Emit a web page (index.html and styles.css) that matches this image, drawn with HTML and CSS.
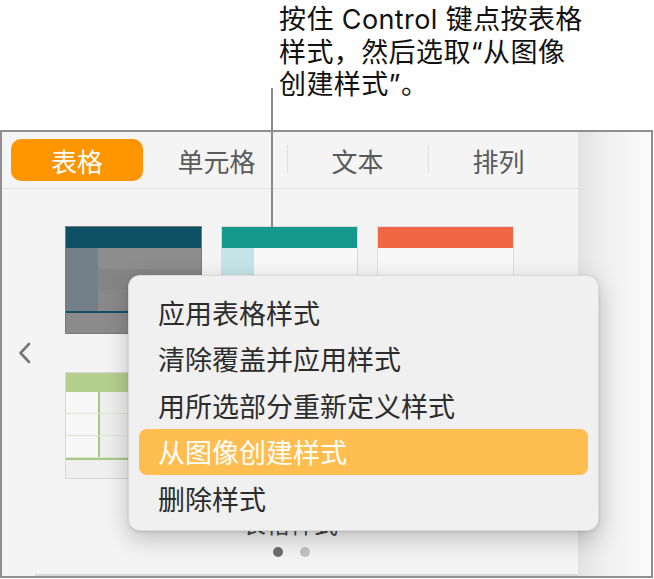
FILE: index.html
```html
<!DOCTYPE html>
<html lang="zh-CN">
<head>
<meta charset="utf-8">
<title>表格样式</title>
<link rel="stylesheet" href="styles.css">
</head>
<body>
<div class="page">
  <div class="callout">
    <p class="callout-text">按住 Control 键点按表格<br>样式，然后选取“从图像<br>创建样式”。</p>
  </div>
  <div class="leader"></div>
  <div class="window">
    <div class="panel">
      <div class="tabs">
        <div class="tab"><span class="pill">表格</span></div>
        <div class="tab">单元格</div>
        <div class="tab sep">文本</div>
        <div class="tab sep">排列</div>
      </div>
      <div class="content">
        <div class="carousel">
          <div class="nav">
            <svg class="chev" width="16" height="24" viewBox="0 0 16 24"><polyline points="12,3 3.5,12 12,21" fill="none" stroke="#777" stroke-width="2.6" stroke-linecap="round" stroke-linejoin="round"/></svg>
          </div>
          <div class="grid">
            <div class="thumb dark">
              <div class="th-head"></div>
              <div class="th-row r1"><div class="c1"></div><div class="c2"></div></div>
              <div class="th-row r2"><div class="c1"></div><div class="c2"></div></div>
              <div class="th-row r3"><div class="c1"></div><div class="c2"></div></div>
              <div class="th-rule"></div>
              <div class="th-foot"></div>
            </div>
            <div class="thumb teal">
              <div class="th-head"></div>
              <div class="th-row"><div class="c1"></div><div class="c2"></div></div>
              <div class="th-row"><div class="c1"></div><div class="c2"></div></div>
              <div class="th-row"><div class="c1"></div><div class="c2"></div></div>
              <div class="th-rule"></div>
              <div class="th-foot"></div>
            </div>
            <div class="thumb coral">
              <div class="th-head"></div>
              <div class="th-row"><div class="c1"></div><div class="c2"></div></div>
              <div class="th-row"><div class="c1"></div><div class="c2"></div></div>
              <div class="th-row"><div class="c1"></div><div class="c2"></div></div>
              <div class="th-rule"></div>
              <div class="th-foot"></div>
            </div>
            <div class="thumb green">
              <div class="th-head"></div>
              <div class="th-row"><div class="c1"></div><div class="c2"></div></div>
              <div class="th-row"><div class="c1"></div><div class="c2"></div></div>
              <div class="th-row"><div class="c1"></div><div class="c2"></div></div>
              <div class="th-rule"></div>
              <div class="th-foot"></div>
            </div>
            <div class="thumb plain">
              <div class="th-head"></div>
              <div class="th-row"><div class="c1"></div><div class="c2"></div></div>
              <div class="th-row"><div class="c1"></div><div class="c2"></div></div>
              <div class="th-row"><div class="c1"></div><div class="c2"></div></div>
              <div class="th-rule"></div>
              <div class="th-foot"></div>
            </div>
            <div class="thumb plain">
              <div class="th-head"></div>
              <div class="th-row"><div class="c1"></div><div class="c2"></div></div>
              <div class="th-row"><div class="c1"></div><div class="c2"></div></div>
              <div class="th-row"><div class="c1"></div><div class="c2"></div></div>
              <div class="th-rule"></div>
              <div class="th-foot"></div>
            </div>
          </div>
        </div>
        <div class="label">表格样式</div>
        <div class="dots"><span class="dot on"></span><span class="dot"></span></div>
        <div class="scrollline"></div>
      </div>
    </div>
    <div class="side"></div>
    <div class="menu">
      <div class="item">应用表格样式</div>
      <div class="item">清除覆盖并应用样式</div>
      <div class="item">用所选部分重新定义样式</div>
      <div class="item selected">从图像创建样式</div>
      <div class="item">删除样式</div>
    </div>
  </div>
</div>
</body>
</html>
```

FILE: styles.css
```css
* { box-sizing: border-box; }
html, body { margin: 0; padding: 0; background: #ffffff; }
body {
  font-family: Inter, "Noto Sans CJK SC", sans-serif;
  width: 654px;
  height: 579px;
  overflow: hidden;
}
.page { position: relative; width: 654px; height: 579px; }

.callout { height: 130px; }
.callout-text {
  margin: 0;
  padding: 4px 0 0 279px;
  font-size: 27px;
  line-height: 32.5px;
  color: #111;
  letter-spacing: 0.4px;
}
.leader {
  position: absolute;
  left: 271px;
  top: 88px;
  width: 2px;
  height: 139px;
  background: #8a8a8a;
  z-index: 3;
}

.window {
  position: relative;
  width: 653px;
  height: 448px;
  border: 2px solid #8f8f8f;
  display: flex;
}
.panel {
  width: 576px;
  background: #f4f4f4;
  display: flex;
  flex-direction: column;
}
.tabs {
  height: 57px;
  border-bottom: 1px solid #e2e2e2;
  display: flex;
  align-items: center;
  padding-left: 3px;
}
.tab {
  width: 141px;
  height: 42px;
  display: flex;
  align-items: center;
  justify-content: center;
  font-size: 26px;
  color: #5a5a5a;
  font-family: "Noto Sans CJK SC", sans-serif;
  position: relative;
}
.tab.sep::before {
  content: "";
  position: absolute;
  left: 0;
  top: 6px;
  width: 1px;
  height: 28px;
  background: #e0e0e0;
}
.pill {
  display: flex;
  align-items: center;
  justify-content: center;
  width: 132px;
  height: 42px;
  margin-left: 3px;
  border-radius: 10px;
  background: #ff9500;
  color: #fff;
}

.content {
  flex: 1;
  display: flex;
  flex-direction: column;
  padding-top: 37px;
}
.carousel { display: flex; align-items: center; }
.nav { width: 63px; padding-left: 15px; display: flex; align-items: center; }
.chev { display: block; }
.grid {
  display: grid;
  grid-template-columns: repeat(3, 137px);
  grid-template-rows: 108px 107px;
  column-gap: 19px;
  row-gap: 38px;
}
.thumb {
  border: 1px solid #d8d8d8;
  display: flex;
  flex-direction: column;
  overflow: hidden;
  background: #f7f7f7;
}
.th-head { height: 21px; flex: none; }
.th-row { height: 21px; display: flex; flex: none; }
.th-row .c1 { width: 32px; }
.th-row .c2 { flex: 1; }
.th-rule { height: 2px; flex: none; }
.th-foot { flex: 1; }

.dark { border-color: #7a7a7a; background: #8b8b8b; }
.dark .th-head { background: #0e5165; }
.dark .c1 { background: #73808a; }
.dark .r1 .c2 { background: #8d8d8d; }
.dark .r2 .c2 { background: #858585; }
.dark .r3 .c2 { background: #898989; }
.dark .th-rule { background: #174f63; }
.dark .th-foot { background: #8b8b8b; }

.teal { border-color: #dadada; }
.teal .th-head { background: #16998c; }
.teal .c1 { background: #c4e4e8; }
.teal .c2 { background: #f7f7f7; }
.teal .th-rule { background: #e0e0e0; }
.teal .th-foot { background: #f3f3f3; }

.coral { border-color: #dedede; }
.coral .th-head { background: #f06843; }
.coral .c1, .coral .c2 { background: #f7f7f7; }
.coral .th-rule { background: #e4e4e4; }
.coral .th-foot { background: #f3f3f3; }

.green { border-color: #d6d6d6; }
.green .th-head { height: 19px; background: #b5cf8e; }
.green .th-row { height: 22px; border-bottom: 1px solid #dfe6d6; }
.green .c1 { background: #f7f7f7; }
.green .c2 { background: #eeeeee; border-left: 2px solid #a9c884; }
.green .th-rule { background: #a9c884; }
.green .th-foot { background: #efefef; }

.plain .th-head { background: #cfcfcf; }

.label {
  margin-top: 29px;
  height: 30px;
  line-height: 30px;
  text-align: center;
  font-size: 24px;
  color: #444;
  font-family: "Noto Sans CJK SC", sans-serif;
}
.dots {
  margin-top: 9px;
  display: flex;
  justify-content: center;
  gap: 17px;
  padding-left: 2px;
}
.dot { width: 10px; height: 10px; border-radius: 50%; background: #c4c4c4; }
.dot.on { background: #6e6e6e; }
.scrollline {
  margin-top: auto;
  margin-left: 33px;
  height: 2px;
  background: #dadada;
}

.side {
  flex: 1;
  background: linear-gradient(to right, #e2e2e2 0%, #efefef 35%, #fbfbfb 100%);
}

.menu {
  position: absolute;
  left: 126px;
  top: 143px;
  width: 471px;
  height: 256px;
  padding: 13px 10px 0 10px;
  border-radius: 12px;
  background: #f0f0f0;
  border: 1px solid rgba(0,0,0,0.09);
  box-shadow: 0 8px 24px rgba(0,0,0,0.22), 0 1px 3px rgba(0,0,0,0.12);
  z-index: 4;
}
.item {
  height: 46.5px;
  display: flex;
  align-items: center;
  padding-left: 19px;
  font-size: 27px;
  color: #2c2c2c;
  font-family: "Noto Sans CJK SC", sans-serif;
  border-radius: 8px;
}
.item.selected { background: #ffbe4f; color: #fff; }
```
